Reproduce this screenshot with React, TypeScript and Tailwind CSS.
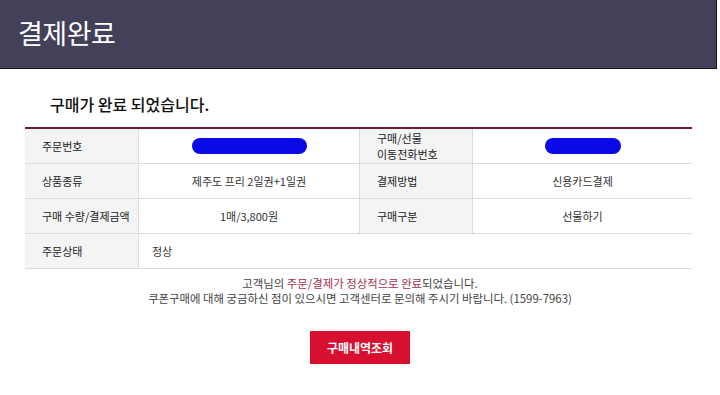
import React from 'react';

const font = { fontFamily: '"Noto Sans CJK KR", "Noto Sans", sans-serif' };

const Blot = ({ w }: { w: string }) => (
  <span className={`inline-block h-[16px] ${w} rounded-full bg-[#0a0ae8]`} />
);

const Label = ({ children }: { children: React.ReactNode }) => (
  <div className="flex h-[35px] items-center border-b border-r border-[#dcdcdc] bg-[#f4f4f4] pl-[17px] text-[11px] leading-[15px] text-[#222]">
    {children}
  </div>
);

const Value = ({ children, last }: { children: React.ReactNode; last?: boolean }) => (
  <div
    className={`flex h-[35px] items-center justify-center border-b border-[#dcdcdc] text-[11px] text-[#333] ${
      last ? '' : 'border-r'
    }`}
  >
    {children}
  </div>
);

const App = () => {
  return (
    <div className="h-[395px] w-[720px] overflow-hidden bg-white" style={font}>
      <div className="flex h-[69px] w-[717px] items-center border-b border-r border-[#15141d] bg-[#43405a] pl-[18px]">
        <h1 className="pb-[2px] text-[27px] font-normal tracking-[-0.5px] text-white">결제완료</h1>
      </div>

      <div className="pl-[25px]">
        <h2 className="mt-[24px] pl-[25px] text-[16px] font-medium leading-[22px] text-[#111]">
          구매가 완료 되었습니다.
        </h2>

        <div className="mt-[12px] grid w-[667px] grid-cols-[114px_221px_113px_219px] border-t-2 border-[#6e1c2e]">
          <Label>주문번호</Label>
          <Value>
            <Blot w="w-[115px]" />
          </Value>
          <Label>
            <span className="block leading-[16px]">
              구매/선물
              <br />
              이동전화번호
            </span>
          </Label>
          <Value last>
            <Blot w="w-[76px]" />
          </Value>

          <Label>상품종류</Label>
          <Value>제주도 프리 2일권+1일권</Value>
          <Label>결제방법</Label>
          <Value last>신용카드결제</Value>

          <Label>구매 수량/결제금액</Label>
          <Value>1매/3,800원</Value>
          <Label>구매구분</Label>
          <Value last>선물하기</Value>

          <Label>주문상태</Label>
          <div className="col-span-3 flex h-[35px] items-center border-b border-[#dcdcdc] pl-[13px] text-[11px] text-[#333]">
            정상
          </div>
        </div>
      </div>

      <div className="mt-[7px] w-[720px] text-center text-[11.4px] leading-[15px] text-[#444]">
        <p>
          고객님의 <span className="text-[#a3304b]">주문/결제가 정상적으로 완료</span>되었습니다.
        </p>
        <p>쿠폰구매에 대해 궁금하신 점이 있으시면 고객센터로 문의해 주시기 바랍니다. (1599-7963)</p>
      </div>

      <div className="mt-[25px] flex justify-center">
        <button className="h-[33px] w-[100px] bg-[#d8102f] text-[12px] font-bold text-white">구매내역조회</button>
      </div>
    </div>
  );
};

export default App;
